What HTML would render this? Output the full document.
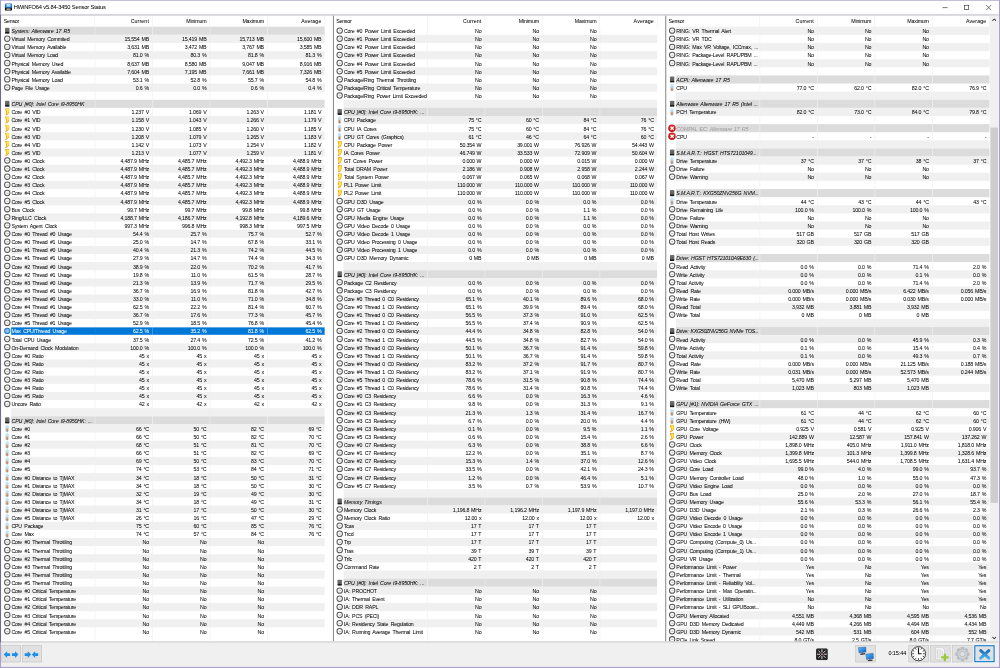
<!DOCTYPE html>
<html lang="en"><head><meta charset="utf-8"><title>HWiNFO64 v5.84-3450 Sensor Status</title>
<style>
*{box-sizing:border-box;margin:0;padding:0}
html,body{width:1000px;height:668px;overflow:hidden;background:#f0f0f0}
body{font-family:"Liberation Sans",sans-serif;font-size:15.6px;color:#000;letter-spacing:-0.68px;word-spacing:3.5px;-webkit-text-stroke:0.07px #000}
#app{position:absolute;left:0;top:0;width:2957px;height:1975.3px;transform:scale(0.338181);transform-origin:0 0;background:#f0f0f0;overflow:hidden;filter:blur(1.45px)}
#app div,#app span,#app i{position:absolute}
.tb{left:0;top:0;width:2957px;height:41px;background:#fff}
.ttl{left:41px;top:10px;font-size:17px;letter-spacing:-0.5px;word-spacing:0;line-height:24px;white-space:nowrap;color:#000}
.bd{background:#aaa0cd}
.lt{left:3px;top:43px;width:2949px;height:4px;background:#b6bac2}
.lb{left:3px;top:1896px;width:2949px;height:4px;background:#d2d2d2}
.p{top:46px;height:1850px;background:#fff;overflow:hidden}
.dv{left:-0.5px;top:0;width:3.6px;height:100%;background:#707070}
.hd{left:3px;top:0;width:980px;height:34px}
.hd span{top:0;line-height:35px;height:34px;white-space:nowrap}
.hd .hl{left:7px}
.hd .hs{width:1px;top:0;height:34px;background:#e2e2e2}
.rows{left:0;top:33px;width:983px}
.r{position:relative!important;display:block;height:24px;width:983px}
.r span{top:0;height:24px;line-height:28px;white-space:nowrap;overflow:hidden}
.n{left:32px;width:248px;padding-left:1px}
.v{width:170px;text-align:right;padding-right:10.5px;word-spacing:2px;letter-spacing:-0.55px}
.v1{left:280px}.v2{left:450px}.v3{left:620px}.v4{left:790px}
.v4{width:169px;padding-right:9.5px}
.sep{top:33px;width:2px;height:2000px;background:rgba(238,238,238,.85);z-index:2}
.s{z-index:3}
.a span{background:#f0f0f0}
.g span{background:#dcdcdc}
.g .n{font-style:italic;letter-spacing:-0.4px;word-spacing:2.5px}
.gx .n{color:#a0a0a0;-webkit-text-stroke-color:#a0a0a0}
.s span{background:#0078d7;color:#fff;-webkit-text-stroke-color:#fff;top:1px;height:22px;line-height:26px}

/* icons */
.r i{display:block}
.c{left:11px;top:2px;width:18.5px;height:18.5px;border:3px solid #585858;border-radius:50%;background:#fafafa}
.c::after{content:"";position:absolute;left:3.6px;top:5.6px;width:6px;height:2px;background:#b09898}
.s .c{border-color:#2b7fca;background:#78b6ea}
.s .c::after{background:#d0e4f8}
.h{left:13.5px;top:3px;width:13px;height:18px;border-radius:2px;background:linear-gradient(#747474,#5a5a5a 70%,#1c1c1c 78%,#1c1c1c 92%,#555)}
.t{left:15px;top:1px;width:10px;height:22px;border-radius:5px;background:linear-gradient(#d8eaf8 0,#bcdcf4 40%,#9ccaee 100%)}
.t::after{content:"";position:absolute;left:3px;top:10px;width:4px;height:10px;border-radius:2px;background:linear-gradient(#f8a848,#f07018 60%,#e85808)}
.b{left:13px;top:1px;width:14px;height:22px;background:#f09428;clip-path:polygon(12% 0,100% 0,100% 45%,74% 78%,26% 100%,8% 97%,30% 70%,26% 42%,8% 16%)}
.b::after{content:"";position:absolute;left:0;top:0;width:14px;height:22px;background:linear-gradient(#ffe040,#fff030 45%,#ffd000);clip-path:polygon(26% 7%,88% 7%,88% 43%,66% 72%,30% 90%,24% 90%,42% 68%,40% 40%,24% 16%)}
.x{left:9px;top:1px;width:22px;height:22px;border-radius:50%;background:radial-gradient(circle at 50% 35%,#e03030,#b80808)}
.x::before,.x::after{content:"";position:absolute;left:4.5px;top:9px;width:13px;height:4px;background:#fff;transform:rotate(45deg)}
.x::after{transform:rotate(-45deg)}
.sb{left:960px;top:0;width:25px;height:100%;background:#f0f0f0}
.th{left:962px;top:331px;width:23px;height:1110px;background:#cdcdcd}
.btn{top:1908px;height:50px;background:#e1e1e1;border:1.5px solid #adadad}
.time{left:2627px;top:1919px;line-height:24px;font-size:16.5px;letter-spacing:-0.3px;white-space:nowrap}
</style></head>
<body>
<div id="app">
<div class="tb"></div>
<svg style="position:absolute;left:14px;top:10px" width="22" height="22" viewBox="0 0 22 22">
<defs><linearGradient id="gi" x1="0" y1="0" x2="0" y2="1"><stop offset="0" stop-color="#2f9ae0"/><stop offset="1" stop-color="#0d5a9a"/></linearGradient></defs>
<rect x="0" y="0" width="22" height="22" rx="4" fill="#0a0a0a"/>
<path d="M4 0h14a4 4 0 0 1 4 4v10h-22v-10a4 4 0 0 1 4-4z" fill="url(#gi)"/>
<rect x="5" y="2" width="12" height="8" rx="1" fill="#b4dcf8"/>
<rect x="5" y="14.5" width="12" height="6" fill="#9a9a9a"/>
</svg>
<div class="ttl">HWiNFO64 v5.84-3450 Sensor Status</div>
<svg style="position:absolute;left:2770px;top:4px" width="180" height="36" viewBox="0 0 180 36">
<path d="M17 18.5h15" stroke="#222" stroke-width="1.8"/>
<rect x="81.500" y="11.500" width="13" height="13" fill="none" stroke="#222" stroke-width="1.8"/>
<path d="M146 11l15 15M161 11l-15 15" stroke="#222" stroke-width="1.8"/>
</svg>
<div class="lt"></div><div class="lb"></div>
<div class="p" style="left:1px;width:983px">
<div class="hd"><span class="hl">Sensor</span>
<span class="v v1" style="left:277px;letter-spacing:.3px">Current</span>
<span class="v v2" style="left:447px">Minimum</span>
<span class="v v3" style="left:617px">Maximum</span>
<span class="v v4" style="left:787px;letter-spacing:.3px">Average</span>
<span class="hs" style="left:276px"></span>
<span class="hs" style="left:446px"></span>
<span class="hs" style="left:616px"></span>
<span class="hs" style="left:786px"></span>
<span class="hs" style="left:956px"></span>
</div>
<div class="sep" style="left:279px"></div>
<div class="sep" style="left:449px"></div>
<div class="sep" style="left:619px"></div>
<div class="sep" style="left:789px"></div>
<div class="rows">
<div class="r g"><i class="h"></i><span class="n">System: Alienware 17 R5</span><span class="v v1"></span><span class="v v2"></span><span class="v v3"></span><span class="v v4"></span></div>
<div class="r a"><i class="c"></i><span class="n">Virtual Memory Commited</span><span class="v v1">15,554 MB</span><span class="v v2">15,419 MB</span><span class="v v3">15,713 MB</span><span class="v v4">15,600 MB</span></div>
<div class="r"><i class="c"></i><span class="n">Virtual Memory Available</span><span class="v v1">3,631 MB</span><span class="v v2">3,472 MB</span><span class="v v3">3,767 MB</span><span class="v v4">3,585 MB</span></div>
<div class="r a"><i class="c"></i><span class="n">Virtual Memory Load</span><span class="v v1">81.0 %</span><span class="v v2">80.3 %</span><span class="v v3">81.8 %</span><span class="v v4">81.3 %</span></div>
<div class="r"><i class="c"></i><span class="n">Physical Memory Used</span><span class="v v1">8,637 MB</span><span class="v v2">8,580 MB</span><span class="v v3">9,047 MB</span><span class="v v4">8,916 MB</span></div>
<div class="r a"><i class="c"></i><span class="n">Physical Memory Available</span><span class="v v1">7,604 MB</span><span class="v v2">7,195 MB</span><span class="v v3">7,661 MB</span><span class="v v4">7,326 MB</span></div>
<div class="r"><i class="c"></i><span class="n">Physical Memory Load</span><span class="v v1">53.1 %</span><span class="v v2">52.8 %</span><span class="v v3">55.7 %</span><span class="v v4">54.8 %</span></div>
<div class="r a"><i class="c"></i><span class="n">Page File Usage</span><span class="v v1">0.6 %</span><span class="v v2">0.0 %</span><span class="v v3">0.6 %</span><span class="v v4">0.4 %</span></div>
<div class="r"></div>
<div class="r g"><i class="h"></i><span class="n">CPU [#0]: Intel Core i9-8950HK</span><span class="v v1"></span><span class="v v2"></span><span class="v v3"></span><span class="v v4"></span></div>
<div class="r"><i class="b"></i><span class="n">Core #0 VID</span><span class="v v1">1.237 V</span><span class="v v2">1.069 V</span><span class="v v3">1.263 V</span><span class="v v4">1.181 V</span></div>
<div class="r a"><i class="b"></i><span class="n">Core #1 VID</span><span class="v v1">1.158 V</span><span class="v v2">1.043 V</span><span class="v v3">1.266 V</span><span class="v v4">1.179 V</span></div>
<div class="r"><i class="b"></i><span class="n">Core #2 VID</span><span class="v v1">1.230 V</span><span class="v v2">1.085 V</span><span class="v v3">1.260 V</span><span class="v v4">1.185 V</span></div>
<div class="r a"><i class="b"></i><span class="n">Core #3 VID</span><span class="v v1">1.208 V</span><span class="v v2">1.079 V</span><span class="v v3">1.265 V</span><span class="v v4">1.183 V</span></div>
<div class="r"><i class="b"></i><span class="n">Core #4 VID</span><span class="v v1">1.142 V</span><span class="v v2">1.073 V</span><span class="v v3">1.254 V</span><span class="v v4">1.182 V</span></div>
<div class="r a"><i class="b"></i><span class="n">Core #5 VID</span><span class="v v1">1.213 V</span><span class="v v2">1.077 V</span><span class="v v3">1.259 V</span><span class="v v4">1.181 V</span></div>
<div class="r"><i class="c"></i><span class="n">Core #0 Clock</span><span class="v v1">4,487.9 MHz</span><span class="v v2">4,485.7 MHz</span><span class="v v3">4,492.3 MHz</span><span class="v v4">4,488.9 MHz</span></div>
<div class="r a"><i class="c"></i><span class="n">Core #1 Clock</span><span class="v v1">4,487.9 MHz</span><span class="v v2">4,485.7 MHz</span><span class="v v3">4,492.3 MHz</span><span class="v v4">4,488.9 MHz</span></div>
<div class="r"><i class="c"></i><span class="n">Core #2 Clock</span><span class="v v1">4,487.9 MHz</span><span class="v v2">4,485.7 MHz</span><span class="v v3">4,492.3 MHz</span><span class="v v4">4,488.9 MHz</span></div>
<div class="r a"><i class="c"></i><span class="n">Core #3 Clock</span><span class="v v1">4,487.9 MHz</span><span class="v v2">4,485.7 MHz</span><span class="v v3">4,492.3 MHz</span><span class="v v4">4,488.9 MHz</span></div>
<div class="r"><i class="c"></i><span class="n">Core #4 Clock</span><span class="v v1">4,487.9 MHz</span><span class="v v2">4,485.7 MHz</span><span class="v v3">4,492.3 MHz</span><span class="v v4">4,488.9 MHz</span></div>
<div class="r a"><i class="c"></i><span class="n">Core #5 Clock</span><span class="v v1">4,487.9 MHz</span><span class="v v2">4,485.7 MHz</span><span class="v v3">4,492.3 MHz</span><span class="v v4">4,488.9 MHz</span></div>
<div class="r"><i class="c"></i><span class="n">Bus Clock</span><span class="v v1">99.7 MHz</span><span class="v v2">99.7 MHz</span><span class="v v3">99.8 MHz</span><span class="v v4">99.8 MHz</span></div>
<div class="r a"><i class="c"></i><span class="n">Ring/LLC Clock</span><span class="v v1">4,188.7 MHz</span><span class="v v2">4,186.7 MHz</span><span class="v v3">4,192.8 MHz</span><span class="v v4">4,189.6 MHz</span></div>
<div class="r"><i class="c"></i><span class="n">System Agent Clock</span><span class="v v1">997.3 MHz</span><span class="v v2">996.8 MHz</span><span class="v v3">998.3 MHz</span><span class="v v4">997.5 MHz</span></div>
<div class="r a"><i class="c"></i><span class="n">Core #0 Thread #0 Usage</span><span class="v v1">54.4 %</span><span class="v v2">25.7 %</span><span class="v v3">75.7 %</span><span class="v v4">52.7 %</span></div>
<div class="r"><i class="c"></i><span class="n">Core #0 Thread #1 Usage</span><span class="v v1">25.0 %</span><span class="v v2">14.7 %</span><span class="v v3">67.8 %</span><span class="v v4">33.1 %</span></div>
<div class="r a"><i class="c"></i><span class="n">Core #1 Thread #0 Usage</span><span class="v v1">40.4 %</span><span class="v v2">21.3 %</span><span class="v v3">74.2 %</span><span class="v v4">44.5 %</span></div>
<div class="r"><i class="c"></i><span class="n">Core #1 Thread #1 Usage</span><span class="v v1">27.9 %</span><span class="v v2">14.7 %</span><span class="v v3">74.4 %</span><span class="v v4">34.3 %</span></div>
<div class="r a"><i class="c"></i><span class="n">Core #2 Thread #0 Usage</span><span class="v v1">38.9 %</span><span class="v v2">22.0 %</span><span class="v v3">70.2 %</span><span class="v v4">41.7 %</span></div>
<div class="r"><i class="c"></i><span class="n">Core #2 Thread #1 Usage</span><span class="v v1">19.8 %</span><span class="v v2">11.0 %</span><span class="v v3">61.5 %</span><span class="v v4">28.7 %</span></div>
<div class="r a"><i class="c"></i><span class="n">Core #3 Thread #0 Usage</span><span class="v v1">21.3 %</span><span class="v v2">13.9 %</span><span class="v v3">71.7 %</span><span class="v v4">29.5 %</span></div>
<div class="r"><i class="c"></i><span class="n">Core #3 Thread #1 Usage</span><span class="v v1">36.7 %</span><span class="v v2">16.9 %</span><span class="v v3">81.8 %</span><span class="v v4">42.7 %</span></div>
<div class="r a"><i class="c"></i><span class="n">Core #4 Thread #0 Usage</span><span class="v v1">33.0 %</span><span class="v v2">11.0 %</span><span class="v v3">71.0 %</span><span class="v v4">34.8 %</span></div>
<div class="r"><i class="c"></i><span class="n">Core #4 Thread #1 Usage</span><span class="v v1">62.5 %</span><span class="v v2">22.2 %</span><span class="v v3">81.4 %</span><span class="v v4">60.7 %</span></div>
<div class="r a"><i class="c"></i><span class="n">Core #5 Thread #0 Usage</span><span class="v v1">36.7 %</span><span class="v v2">17.6 %</span><span class="v v3">77.3 %</span><span class="v v4">45.7 %</span></div>
<div class="r"><i class="c"></i><span class="n">Core #5 Thread #1 Usage</span><span class="v v1">52.9 %</span><span class="v v2">18.5 %</span><span class="v v3">76.8 %</span><span class="v v4">45.4 %</span></div>
<div class="r s"><i class="c"></i><span class="n">Max CPU/Thread Usage</span><span class="v v1">62.5 %</span><span class="v v2">35.2 %</span><span class="v v3">81.8 %</span><span class="v v4">62.5 %</span></div>
<div class="r"><i class="c"></i><span class="n">Total CPU Usage</span><span class="v v1">37.5 %</span><span class="v v2">27.4 %</span><span class="v v3">72.5 %</span><span class="v v4">41.2 %</span></div>
<div class="r a"><i class="c"></i><span class="n">On-Demand Clock Modulation</span><span class="v v1">100.0 %</span><span class="v v2">100.0 %</span><span class="v v3">100.0 %</span><span class="v v4">100.0 %</span></div>
<div class="r"><i class="c"></i><span class="n">Core #0 Ratio</span><span class="v v1">45 x</span><span class="v v2">45 x</span><span class="v v3">45 x</span><span class="v v4">45 x</span></div>
<div class="r a"><i class="c"></i><span class="n">Core #1 Ratio</span><span class="v v1">45 x</span><span class="v v2">45 x</span><span class="v v3">45 x</span><span class="v v4">45 x</span></div>
<div class="r"><i class="c"></i><span class="n">Core #2 Ratio</span><span class="v v1">45 x</span><span class="v v2">45 x</span><span class="v v3">45 x</span><span class="v v4">45 x</span></div>
<div class="r a"><i class="c"></i><span class="n">Core #3 Ratio</span><span class="v v1">45 x</span><span class="v v2">45 x</span><span class="v v3">45 x</span><span class="v v4">45 x</span></div>
<div class="r"><i class="c"></i><span class="n">Core #4 Ratio</span><span class="v v1">45 x</span><span class="v v2">45 x</span><span class="v v3">45 x</span><span class="v v4">45 x</span></div>
<div class="r a"><i class="c"></i><span class="n">Core #5 Ratio</span><span class="v v1">45 x</span><span class="v v2">45 x</span><span class="v v3">45 x</span><span class="v v4">45 x</span></div>
<div class="r"><i class="c"></i><span class="n">Uncore Ratio</span><span class="v v1">42 x</span><span class="v v2">42 x</span><span class="v v3">42 x</span><span class="v v4">42 x</span></div>
<div class="r a"><span class="n"></span><span class="v v1"></span><span class="v v2"></span><span class="v v3"></span><span class="v v4"></span></div>
<div class="r g"><i class="h"></i><span class="n">CPU [#0]: Intel Core i9-8950HK: ...</span><span class="v v1"></span><span class="v v2"></span><span class="v v3"></span><span class="v v4"></span></div>
<div class="r a"><i class="t"></i><span class="n">Core #0</span><span class="v v1">66 °C</span><span class="v v2">50 °C</span><span class="v v3">82 °C</span><span class="v v4">69 °C</span></div>
<div class="r"><i class="t"></i><span class="n">Core #1</span><span class="v v1">66 °C</span><span class="v v2">50 °C</span><span class="v v3">82 °C</span><span class="v v4">70 °C</span></div>
<div class="r a"><i class="t"></i><span class="n">Core #2</span><span class="v v1">68 °C</span><span class="v v2">51 °C</span><span class="v v3">81 °C</span><span class="v v4">70 °C</span></div>
<div class="r"><i class="t"></i><span class="n">Core #3</span><span class="v v1">66 °C</span><span class="v v2">51 °C</span><span class="v v3">82 °C</span><span class="v v4">69 °C</span></div>
<div class="r a"><i class="t"></i><span class="n">Core #4</span><span class="v v1">69 °C</span><span class="v v2">50 °C</span><span class="v v3">83 °C</span><span class="v v4">70 °C</span></div>
<div class="r"><i class="t"></i><span class="n">Core #5</span><span class="v v1">74 °C</span><span class="v v2">53 °C</span><span class="v v3">84 °C</span><span class="v v4">71 °C</span></div>
<div class="r a"><i class="t"></i><span class="n">Core #0 Distance to TjMAX</span><span class="v v1">34 °C</span><span class="v v2">18 °C</span><span class="v v3">50 °C</span><span class="v v4">31 °C</span></div>
<div class="r"><i class="t"></i><span class="n">Core #1 Distance to TjMAX</span><span class="v v1">34 °C</span><span class="v v2">18 °C</span><span class="v v3">50 °C</span><span class="v v4">30 °C</span></div>
<div class="r a"><i class="t"></i><span class="n">Core #2 Distance to TjMAX</span><span class="v v1">32 °C</span><span class="v v2">19 °C</span><span class="v v3">49 °C</span><span class="v v4">30 °C</span></div>
<div class="r"><i class="t"></i><span class="n">Core #3 Distance to TjMAX</span><span class="v v1">34 °C</span><span class="v v2">18 °C</span><span class="v v3">49 °C</span><span class="v v4">31 °C</span></div>
<div class="r a"><i class="t"></i><span class="n">Core #4 Distance to TjMAX</span><span class="v v1">31 °C</span><span class="v v2">17 °C</span><span class="v v3">50 °C</span><span class="v v4">30 °C</span></div>
<div class="r"><i class="t"></i><span class="n">Core #5 Distance to TjMAX</span><span class="v v1">26 °C</span><span class="v v2">16 °C</span><span class="v v3">47 °C</span><span class="v v4">29 °C</span></div>
<div class="r a"><i class="t"></i><span class="n">CPU Package</span><span class="v v1">75 °C</span><span class="v v2">60 °C</span><span class="v v3">85 °C</span><span class="v v4">76 °C</span></div>
<div class="r"><i class="t"></i><span class="n">Core Max</span><span class="v v1">74 °C</span><span class="v v2">57 °C</span><span class="v v3">84 °C</span><span class="v v4">76 °C</span></div>
<div class="r a"><i class="c"></i><span class="n">Core #0 Thermal Throttling</span><span class="v v1">No</span><span class="v v2">No</span><span class="v v3">No</span><span class="v v4"></span></div>
<div class="r"><i class="c"></i><span class="n">Core #1 Thermal Throttling</span><span class="v v1">No</span><span class="v v2">No</span><span class="v v3">No</span></div>
<div class="r a"><i class="c"></i><span class="n">Core #2 Thermal Throttling</span><span class="v v1">No</span><span class="v v2">No</span><span class="v v3">No</span><span class="v v4"></span></div>
<div class="r"><i class="c"></i><span class="n">Core #3 Thermal Throttling</span><span class="v v1">No</span><span class="v v2">No</span><span class="v v3">No</span></div>
<div class="r a"><i class="c"></i><span class="n">Core #4 Thermal Throttling</span><span class="v v1">No</span><span class="v v2">No</span><span class="v v3">No</span><span class="v v4"></span></div>
<div class="r"><i class="c"></i><span class="n">Core #5 Thermal Throttling</span><span class="v v1">No</span><span class="v v2">No</span><span class="v v3">No</span></div>
<div class="r a"><i class="c"></i><span class="n">Core #0 Critical Temperature</span><span class="v v1">No</span><span class="v v2">No</span><span class="v v3">No</span><span class="v v4"></span></div>
<div class="r"><i class="c"></i><span class="n">Core #1 Critical Temperature</span><span class="v v1">No</span><span class="v v2">No</span><span class="v v3">No</span></div>
<div class="r a"><i class="c"></i><span class="n">Core #2 Critical Temperature</span><span class="v v1">No</span><span class="v v2">No</span><span class="v v3">No</span><span class="v v4"></span></div>
<div class="r"><i class="c"></i><span class="n">Core #3 Critical Temperature</span><span class="v v1">No</span><span class="v v2">No</span><span class="v v3">No</span></div>
<div class="r a"><i class="c"></i><span class="n">Core #4 Critical Temperature</span><span class="v v1">No</span><span class="v v2">No</span><span class="v v3">No</span><span class="v v4"></span></div>
<div class="r"><i class="c"></i><span class="n">Core #5 Critical Temperature</span><span class="v v1">No</span><span class="v v2">No</span><span class="v v3">No</span></div>
<div class="r"></div>
</div>
</div>
<div class="p" style="left:984px;width:983px">
<div class="dv"></div>
<div class="hd"><span class="hl">Sensor</span>
<span class="v v1" style="left:277px;letter-spacing:.3px">Current</span>
<span class="v v2" style="left:447px">Minimum</span>
<span class="v v3" style="left:617px">Maximum</span>
<span class="v v4" style="left:787px;letter-spacing:.3px">Average</span>
<span class="hs" style="left:276px"></span>
<span class="hs" style="left:446px"></span>
<span class="hs" style="left:616px"></span>
<span class="hs" style="left:786px"></span>
<span class="hs" style="left:956px"></span>
</div>
<div class="sep" style="left:279px"></div>
<div class="sep" style="left:449px"></div>
<div class="sep" style="left:619px"></div>
<div class="sep" style="left:789px"></div>
<div class="rows">
<div class="r"><i class="c"></i><span class="n">Core #0 Power Limit Exceeded</span><span class="v v1">No</span><span class="v v2">No</span><span class="v v3">No</span></div>
<div class="r a"><i class="c"></i><span class="n">Core #1 Power Limit Exceeded</span><span class="v v1">No</span><span class="v v2">No</span><span class="v v3">No</span><span class="v v4"></span></div>
<div class="r"><i class="c"></i><span class="n">Core #2 Power Limit Exceeded</span><span class="v v1">No</span><span class="v v2">No</span><span class="v v3">No</span></div>
<div class="r a"><i class="c"></i><span class="n">Core #3 Power Limit Exceeded</span><span class="v v1">No</span><span class="v v2">No</span><span class="v v3">No</span><span class="v v4"></span></div>
<div class="r"><i class="c"></i><span class="n">Core #4 Power Limit Exceeded</span><span class="v v1">No</span><span class="v v2">No</span><span class="v v3">No</span></div>
<div class="r a"><i class="c"></i><span class="n">Core #5 Power Limit Exceeded</span><span class="v v1">No</span><span class="v v2">No</span><span class="v v3">No</span><span class="v v4"></span></div>
<div class="r"><i class="c"></i><span class="n">Package/Ring Thermal Throttling</span><span class="v v1">No</span><span class="v v2">No</span><span class="v v3">No</span></div>
<div class="r a"><i class="c"></i><span class="n">Package/Ring Critical Temperature</span><span class="v v1">No</span><span class="v v2">No</span><span class="v v3">No</span><span class="v v4"></span></div>
<div class="r"><i class="c"></i><span class="n">Package/Ring Power Limit Exceeded</span><span class="v v1">No</span><span class="v v2">No</span><span class="v v3">No</span></div>
<div class="r a"><span class="n"></span><span class="v v1"></span><span class="v v2"></span><span class="v v3"></span><span class="v v4"></span></div>
<div class="r g"><i class="h"></i><span class="n">CPU [#0]: Intel Core i9-8950HK: ...</span><span class="v v1"></span><span class="v v2"></span><span class="v v3"></span><span class="v v4"></span></div>
<div class="r a"><i class="t"></i><span class="n">CPU Package</span><span class="v v1">75 °C</span><span class="v v2">60 °C</span><span class="v v3">84 °C</span><span class="v v4">76 °C</span></div>
<div class="r"><i class="t"></i><span class="n">CPU IA Cores</span><span class="v v1">75 °C</span><span class="v v2">60 °C</span><span class="v v3">84 °C</span><span class="v v4">76 °C</span></div>
<div class="r a"><i class="t"></i><span class="n">CPU GT Cores (Graphics)</span><span class="v v1">61 °C</span><span class="v v2">46 °C</span><span class="v v3">64 °C</span><span class="v v4">60 °C</span></div>
<div class="r"><i class="b"></i><span class="n">CPU Package Power</span><span class="v v1">50.354 W</span><span class="v v2">39.001 W</span><span class="v v3">76.926 W</span><span class="v v4">54.443 W</span></div>
<div class="r a"><i class="b"></i><span class="n">IA Cores Power</span><span class="v v1">46.749 W</span><span class="v v2">33.533 W</span><span class="v v3">72.909 W</span><span class="v v4">50.604 W</span></div>
<div class="r"><i class="b"></i><span class="n">GT Cores Power</span><span class="v v1">0.000 W</span><span class="v v2">0.000 W</span><span class="v v3">0.015 W</span><span class="v v4">0.000 W</span></div>
<div class="r a"><i class="b"></i><span class="n">Total DRAM Power</span><span class="v v1">2.186 W</span><span class="v v2">0.908 W</span><span class="v v3">2.958 W</span><span class="v v4">2.244 W</span></div>
<div class="r"><i class="b"></i><span class="n">Total System Power</span><span class="v v1">0.067 W</span><span class="v v2">0.065 W</span><span class="v v3">0.068 W</span><span class="v v4">0.067 W</span></div>
<div class="r a"><i class="b"></i><span class="n">PL1 Power Limit</span><span class="v v1">110.000 W</span><span class="v v2">110.000 W</span><span class="v v3">110.000 W</span><span class="v v4">110.000 W</span></div>
<div class="r"><i class="b"></i><span class="n">PL2 Power Limit</span><span class="v v1">110.000 W</span><span class="v v2">110.000 W</span><span class="v v3">110.000 W</span><span class="v v4">110.000 W</span></div>
<div class="r a"><i class="c"></i><span class="n">GPU D3D Usage</span><span class="v v1">0.0 %</span><span class="v v2">0.0 %</span><span class="v v3">0.0 %</span><span class="v v4">0.0 %</span></div>
<div class="r"><i class="c"></i><span class="n">GPU GT Usage</span><span class="v v1">0.0 %</span><span class="v v2">0.0 %</span><span class="v v3">1.1 %</span><span class="v v4">0.0 %</span></div>
<div class="r a"><i class="c"></i><span class="n">GPU Media Engine Usage</span><span class="v v1">0.0 %</span><span class="v v2">0.0 %</span><span class="v v3">1.1 %</span><span class="v v4">0.0 %</span></div>
<div class="r"><i class="c"></i><span class="n">GPU Video Decode 0 Usage</span><span class="v v1">0.0 %</span><span class="v v2">0.0 %</span><span class="v v3">0.0 %</span><span class="v v4">0.0 %</span></div>
<div class="r a"><i class="c"></i><span class="n">GPU Video Decode 1 Usage</span><span class="v v1">0.0 %</span><span class="v v2">0.0 %</span><span class="v v3">0.0 %</span><span class="v v4">0.0 %</span></div>
<div class="r"><i class="c"></i><span class="n">GPU Video Processing 0 Usage</span><span class="v v1">0.0 %</span><span class="v v2">0.0 %</span><span class="v v3">0.0 %</span><span class="v v4">0.0 %</span></div>
<div class="r a"><i class="c"></i><span class="n">GPU Video Processing 1 Usage</span><span class="v v1">0.0 %</span><span class="v v2">0.0 %</span><span class="v v3">0.0 %</span><span class="v v4">0.0 %</span></div>
<div class="r"><i class="c"></i><span class="n">GPU D3D Memory Dynamic</span><span class="v v1">0 MB</span><span class="v v2">0 MB</span><span class="v v3">0 MB</span><span class="v v4">0 MB</span></div>
<div class="r a"><span class="n"></span><span class="v v1"></span><span class="v v2"></span><span class="v v3"></span><span class="v v4"></span></div>
<div class="r g"><i class="h"></i><span class="n">CPU [#0]: Intel Core i9-8950HK: ...</span><span class="v v1"></span><span class="v v2"></span><span class="v v3"></span><span class="v v4"></span></div>
<div class="r a"><i class="c"></i><span class="n">Package C2 Residency</span><span class="v v1">0.0 %</span><span class="v v2">0.0 %</span><span class="v v3">0.0 %</span><span class="v v4">0.0 %</span></div>
<div class="r"><i class="c"></i><span class="n">Package C3 Residency</span><span class="v v1">0.0 %</span><span class="v v2">0.0 %</span><span class="v v3">0.0 %</span><span class="v v4">0.0 %</span></div>
<div class="r a"><i class="c"></i><span class="n">Core #0 Thread 0 C0 Residency</span><span class="v v1">65.1 %</span><span class="v v2">40.1 %</span><span class="v v3">89.6 %</span><span class="v v4">68.0 %</span></div>
<div class="r"><i class="c"></i><span class="n">Core #0 Thread 1 C0 Residency</span><span class="v v1">65.1 %</span><span class="v v2">39.9 %</span><span class="v v3">89.4 %</span><span class="v v4">68.0 %</span></div>
<div class="r a"><i class="c"></i><span class="n">Core #1 Thread 0 C0 Residency</span><span class="v v1">56.5 %</span><span class="v v2">37.3 %</span><span class="v v3">91.0 %</span><span class="v v4">62.5 %</span></div>
<div class="r"><i class="c"></i><span class="n">Core #1 Thread 1 C0 Residency</span><span class="v v1">56.5 %</span><span class="v v2">37.4 %</span><span class="v v3">90.9 %</span><span class="v v4">62.5 %</span></div>
<div class="r a"><i class="c"></i><span class="n">Core #2 Thread 0 C0 Residency</span><span class="v v1">44.4 %</span><span class="v v2">34.8 %</span><span class="v v3">82.8 %</span><span class="v v4">54.0 %</span></div>
<div class="r"><i class="c"></i><span class="n">Core #2 Thread 1 C0 Residency</span><span class="v v1">44.5 %</span><span class="v v2">34.8 %</span><span class="v v3">82.7 %</span><span class="v v4">54.0 %</span></div>
<div class="r a"><i class="c"></i><span class="n">Core #3 Thread 0 C0 Residency</span><span class="v v1">50.1 %</span><span class="v v2">36.7 %</span><span class="v v3">91.4 %</span><span class="v v4">59.8 %</span></div>
<div class="r"><i class="c"></i><span class="n">Core #3 Thread 1 C0 Residency</span><span class="v v1">50.1 %</span><span class="v v2">36.7 %</span><span class="v v3">91.4 %</span><span class="v v4">59.8 %</span></div>
<div class="r a"><i class="c"></i><span class="n">Core #4 Thread 0 C0 Residency</span><span class="v v1">83.2 %</span><span class="v v2">37.2 %</span><span class="v v3">91.7 %</span><span class="v v4">80.7 %</span></div>
<div class="r"><i class="c"></i><span class="n">Core #4 Thread 1 C0 Residency</span><span class="v v1">83.2 %</span><span class="v v2">37.1 %</span><span class="v v3">91.9 %</span><span class="v v4">80.7 %</span></div>
<div class="r a"><i class="c"></i><span class="n">Core #5 Thread 0 C0 Residency</span><span class="v v1">78.6 %</span><span class="v v2">31.5 %</span><span class="v v3">90.8 %</span><span class="v v4">74.4 %</span></div>
<div class="r"><i class="c"></i><span class="n">Core #5 Thread 1 C0 Residency</span><span class="v v1">78.6 %</span><span class="v v2">31.4 %</span><span class="v v3">90.8 %</span><span class="v v4">74.4 %</span></div>
<div class="r a"><i class="c"></i><span class="n">Core #0 C3 Residency</span><span class="v v1">6.6 %</span><span class="v v2">0.0 %</span><span class="v v3">16.3 %</span><span class="v v4">4.6 %</span></div>
<div class="r"><i class="c"></i><span class="n">Core #1 C3 Residency</span><span class="v v1">9.8 %</span><span class="v v2">0.0 %</span><span class="v v3">31.3 %</span><span class="v v4">9.1 %</span></div>
<div class="r a"><i class="c"></i><span class="n">Core #2 C3 Residency</span><span class="v v1">21.3 %</span><span class="v v2">1.3 %</span><span class="v v3">31.4 %</span><span class="v v4">16.7 %</span></div>
<div class="r"><i class="c"></i><span class="n">Core #3 C3 Residency</span><span class="v v1">6.7 %</span><span class="v v2">0.0 %</span><span class="v v3">20.0 %</span><span class="v v4">4.4 %</span></div>
<div class="r a"><i class="c"></i><span class="n">Core #4 C3 Residency</span><span class="v v1">0.1 %</span><span class="v v2">0.0 %</span><span class="v v3">9.5 %</span><span class="v v4">1.1 %</span></div>
<div class="r"><i class="c"></i><span class="n">Core #5 C3 Residency</span><span class="v v1">0.6 %</span><span class="v v2">0.0 %</span><span class="v v3">15.4 %</span><span class="v v4">2.6 %</span></div>
<div class="r a"><i class="c"></i><span class="n">Core #0 C7 Residency</span><span class="v v1">6.3 %</span><span class="v v2">0.0 %</span><span class="v v3">38.8 %</span><span class="v v4">6.6 %</span></div>
<div class="r"><i class="c"></i><span class="n">Core #1 C7 Residency</span><span class="v v1">12.2 %</span><span class="v v2">0.0 %</span><span class="v v3">35.1 %</span><span class="v v4">8.7 %</span></div>
<div class="r a"><i class="c"></i><span class="n">Core #2 C7 Residency</span><span class="v v1">15.3 %</span><span class="v v2">1.4 %</span><span class="v v3">37.0 %</span><span class="v v4">12.6 %</span></div>
<div class="r"><i class="c"></i><span class="n">Core #3 C7 Residency</span><span class="v v1">33.5 %</span><span class="v v2">0.0 %</span><span class="v v3">42.1 %</span><span class="v v4">24.3 %</span></div>
<div class="r a"><i class="c"></i><span class="n">Core #4 C7 Residency</span><span class="v v1">1.2 %</span><span class="v v2">0.0 %</span><span class="v v3">46.4 %</span><span class="v v4">5.1 %</span></div>
<div class="r"><i class="c"></i><span class="n">Core #5 C7 Residency</span><span class="v v1">3.5 %</span><span class="v v2">0.7 %</span><span class="v v3">53.9 %</span><span class="v v4">10.7 %</span></div>
<div class="r a"><span class="n"></span><span class="v v1"></span><span class="v v2"></span><span class="v v3"></span><span class="v v4"></span></div>
<div class="r g"><i class="h"></i><span class="n">Memory Timings</span><span class="v v1"></span><span class="v v2"></span><span class="v v3"></span><span class="v v4"></span></div>
<div class="r a"><i class="c"></i><span class="n">Memory Clock</span><span class="v v1">1,196.8 MHz</span><span class="v v2">1,196.2 MHz</span><span class="v v3">1,197.9 MHz</span><span class="v v4">1,197.0 MHz</span></div>
<div class="r"><i class="c"></i><span class="n">Memory Clock Ratio</span><span class="v v1">12.00 x</span><span class="v v2">12.00 x</span><span class="v v3">12.00 x</span><span class="v v4">12.00 x</span></div>
<div class="r a"><i class="c"></i><span class="n">Tcas</span><span class="v v1">17 T</span><span class="v v2">17 T</span><span class="v v3">17 T</span><span class="v v4"></span></div>
<div class="r"><i class="c"></i><span class="n">Trcd</span><span class="v v1">17 T</span><span class="v v2">17 T</span><span class="v v3">17 T</span></div>
<div class="r a"><i class="c"></i><span class="n">Trp</span><span class="v v1">17 T</span><span class="v v2">17 T</span><span class="v v3">17 T</span><span class="v v4"></span></div>
<div class="r"><i class="c"></i><span class="n">Tras</span><span class="v v1">39 T</span><span class="v v2">39 T</span><span class="v v3">39 T</span></div>
<div class="r a"><i class="c"></i><span class="n">Trfc</span><span class="v v1">420 T</span><span class="v v2">420 T</span><span class="v v3">420 T</span><span class="v v4"></span></div>
<div class="r"><i class="c"></i><span class="n">Command Rate</span><span class="v v1">2 T</span><span class="v v2">2 T</span><span class="v v3">2 T</span></div>
<div class="r a"><span class="n"></span><span class="v v1"></span><span class="v v2"></span><span class="v v3"></span><span class="v v4"></span></div>
<div class="r g"><i class="h"></i><span class="n">CPU [#0]: Intel Core i9-8950HK: ...</span><span class="v v1"></span><span class="v v2"></span><span class="v v3"></span><span class="v v4"></span></div>
<div class="r a"><i class="c"></i><span class="n">IA: PROCHOT</span><span class="v v1">No</span><span class="v v2">No</span><span class="v v3">No</span><span class="v v4"></span></div>
<div class="r"><i class="c"></i><span class="n">IA: Thermal Event</span><span class="v v1">No</span><span class="v v2">No</span><span class="v v3">No</span></div>
<div class="r a"><i class="c"></i><span class="n">IA: DDR RAPL</span><span class="v v1">No</span><span class="v v2">No</span><span class="v v3">No</span><span class="v v4"></span></div>
<div class="r"><i class="c"></i><span class="n">IA: PCS (PECI)</span><span class="v v1">No</span><span class="v v2">No</span><span class="v v3">No</span></div>
<div class="r a"><i class="c"></i><span class="n">IA: Residency State Regulation</span><span class="v v1">No</span><span class="v v2">No</span><span class="v v3">No</span><span class="v v4"></span></div>
<div class="r"><i class="c"></i><span class="n">IA: Running Average Thermal Limit</span><span class="v v1">No</span><span class="v v2">No</span><span class="v v3">No</span></div>
<div class="r"></div>
</div>
</div>
<div class="p" style="left:1967px;width:985px">
<div class="dv"></div>
<div class="hd"><span class="hl">Sensor</span>
<span class="v v1" style="left:277px;letter-spacing:.3px">Current</span>
<span class="v v2" style="left:447px">Minimum</span>
<span class="v v3" style="left:617px">Maximum</span>
<span class="v v4" style="left:787px;letter-spacing:.3px">Average</span>
<span class="hs" style="left:276px"></span>
<span class="hs" style="left:446px"></span>
<span class="hs" style="left:616px"></span>
<span class="hs" style="left:786px"></span>
<span class="hs" style="left:956px"></span>
</div>
<div class="sep" style="left:279px"></div>
<div class="sep" style="left:449px"></div>
<div class="sep" style="left:619px"></div>
<div class="sep" style="left:789px"></div>
<div class="rows">
<div class="r a"><i class="c"></i><span class="n">RING: VR Thermal Alert</span><span class="v v1">No</span><span class="v v2">No</span><span class="v v3">No</span><span class="v v4"></span></div>
<div class="r"><i class="c"></i><span class="n">RING: VR TDC</span><span class="v v1">No</span><span class="v v2">No</span><span class="v v3">No</span></div>
<div class="r a"><i class="c"></i><span class="n">RING: Max VR Voltage, ICCmax, ...</span><span class="v v1">No</span><span class="v v2">No</span><span class="v v3">No</span><span class="v v4"></span></div>
<div class="r"><i class="c"></i><span class="n">RING: Package-Level RAPL/PBM ...</span><span class="v v1">No</span><span class="v v2">No</span><span class="v v3">No</span></div>
<div class="r a"><i class="c"></i><span class="n">RING: Package-Level RAPL/PBM ...</span><span class="v v1">No</span><span class="v v2">No</span><span class="v v3">No</span><span class="v v4"></span></div>
<div class="r"></div>
<div class="r g"><i class="h"></i><span class="n">ACPI: Alienware 17 R5</span><span class="v v1"></span><span class="v v2"></span><span class="v v3"></span><span class="v v4"></span></div>
<div class="r"><i class="t"></i><span class="n">CPU</span><span class="v v1">77.0 °C</span><span class="v v2">62.0 °C</span><span class="v v3">82.0 °C</span><span class="v v4">76.9 °C</span></div>
<div class="r a"><span class="n"></span><span class="v v1"></span><span class="v v2"></span><span class="v v3"></span><span class="v v4"></span></div>
<div class="r g"><i class="h"></i><span class="n">Alienware Alienware 17 R5 (Intel ...</span><span class="v v1"></span><span class="v v2"></span><span class="v v3"></span><span class="v v4"></span></div>
<div class="r a"><i class="t"></i><span class="n">PCH Temperature</span><span class="v v1">82.0 °C</span><span class="v v2">73.0 °C</span><span class="v v3">84.0 °C</span><span class="v v4">79.8 °C</span></div>
<div class="r"></div>
<div class="r g gx"><i class="x"></i><span class="n">COMPAL EC: Alienware 17 R5</span><span class="v v1"></span><span class="v v2"></span><span class="v v3"></span><span class="v v4"></span></div>
<div class="r"><i class="x"></i><span class="n">CPU</span><span class="v v1">-</span><span class="v v2">-</span><span class="v v3">-</span><span class="v v4">-</span></div>
<div class="r a"><span class="n"></span><span class="v v1"></span><span class="v v2"></span><span class="v v3"></span><span class="v v4"></span></div>
<div class="r g"><i class="h"></i><span class="n">S.M.A.R.T.: HGST HTS72101049...</span><span class="v v1"></span><span class="v v2"></span><span class="v v3"></span><span class="v v4"></span></div>
<div class="r a"><i class="t"></i><span class="n">Drive Temperature</span><span class="v v1">37 °C</span><span class="v v2">37 °C</span><span class="v v3">38 °C</span><span class="v v4">37 °C</span></div>
<div class="r"><i class="c"></i><span class="n">Drive Failure</span><span class="v v1">No</span><span class="v v2">No</span><span class="v v3">No</span></div>
<div class="r a"><i class="c"></i><span class="n">Drive Warning</span><span class="v v1">No</span><span class="v v2">No</span><span class="v v3">No</span><span class="v v4"></span></div>
<div class="r"></div>
<div class="r g"><i class="h"></i><span class="n" style="letter-spacing:-0.55px">S.M.A.R.T.: KXG50ZNV256G NVM...</span><span class="v v1"></span><span class="v v2"></span><span class="v v3"></span><span class="v v4"></span></div>
<div class="r"><i class="t"></i><span class="n">Drive Temperature</span><span class="v v1">44 °C</span><span class="v v2">43 °C</span><span class="v v3">44 °C</span><span class="v v4">43 °C</span></div>
<div class="r a"><i class="c"></i><span class="n">Drive Remaining Life</span><span class="v v1">100.0 %</span><span class="v v2">100.0 %</span><span class="v v3">100.0 %</span><span class="v v4"></span></div>
<div class="r"><i class="c"></i><span class="n">Drive Failure</span><span class="v v1">No</span><span class="v v2">No</span><span class="v v3">No</span></div>
<div class="r a"><i class="c"></i><span class="n">Drive Warning</span><span class="v v1">No</span><span class="v v2">No</span><span class="v v3">No</span><span class="v v4"></span></div>
<div class="r"><i class="c"></i><span class="n">Total Host Writes</span><span class="v v1">517 GB</span><span class="v v2">517 GB</span><span class="v v3">517 GB</span></div>
<div class="r a"><i class="c"></i><span class="n">Total Host Reads</span><span class="v v1">320 GB</span><span class="v v2">320 GB</span><span class="v v3">320 GB</span><span class="v v4"></span></div>
<div class="r"></div>
<div class="r g"><i class="h"></i><span class="n" style="letter-spacing:-0.58px">Drive: HGST HTS721010A9E630 (...</span><span class="v v1"></span><span class="v v2"></span><span class="v v3"></span><span class="v v4"></span></div>
<div class="r"><i class="c"></i><span class="n">Read Activity</span><span class="v v1">0.0 %</span><span class="v v2">0.0 %</span><span class="v v3">71.4 %</span><span class="v v4">2.0 %</span></div>
<div class="r a"><i class="c"></i><span class="n">Write Activity</span><span class="v v1">0.0 %</span><span class="v v2">0.0 %</span><span class="v v3">0.1 %</span><span class="v v4">0.0 %</span></div>
<div class="r"><i class="c"></i><span class="n">Total Activity</span><span class="v v1">0.0 %</span><span class="v v2">0.0 %</span><span class="v v3">71.4 %</span><span class="v v4">2.0 %</span></div>
<div class="r a"><i class="c"></i><span class="n">Read Rate</span><span class="v v1">0.000 MB/s</span><span class="v v2">0.000 MB/s</span><span class="v v3">6.422 MB/s</span><span class="v v4">0.056 MB/s</span></div>
<div class="r"><i class="c"></i><span class="n">Write Rate</span><span class="v v1">0.000 MB/s</span><span class="v v2">0.000 MB/s</span><span class="v v3">0.030 MB/s</span><span class="v v4">0.000 MB/s</span></div>
<div class="r a"><i class="c"></i><span class="n">Read Total</span><span class="v v1">3,932 MB</span><span class="v v2">3,881 MB</span><span class="v v3">3,932 MB</span><span class="v v4"></span></div>
<div class="r"><i class="c"></i><span class="n">Write Total</span><span class="v v1">0 MB</span><span class="v v2">0 MB</span><span class="v v3">0 MB</span></div>
<div class="r a"><span class="n"></span><span class="v v1"></span><span class="v v2"></span><span class="v v3"></span><span class="v v4"></span></div>
<div class="r g"><i class="h"></i><span class="n" style="letter-spacing:-0.84px">Drive: KXG50ZNV256G NVMe TOS...</span><span class="v v1"></span><span class="v v2"></span><span class="v v3"></span><span class="v v4"></span></div>
<div class="r a"><i class="c"></i><span class="n">Read Activity</span><span class="v v1">0.0 %</span><span class="v v2">0.0 %</span><span class="v v3">45.9 %</span><span class="v v4">0.3 %</span></div>
<div class="r"><i class="c"></i><span class="n">Write Activity</span><span class="v v1">0.1 %</span><span class="v v2">0.0 %</span><span class="v v3">15.4 %</span><span class="v v4">0.4 %</span></div>
<div class="r a"><i class="c"></i><span class="n">Total Activity</span><span class="v v1">0.1 %</span><span class="v v2">0.0 %</span><span class="v v3">49.3 %</span><span class="v v4">0.7 %</span></div>
<div class="r"><i class="c"></i><span class="n">Read Rate</span><span class="v v1">0.000 MB/s</span><span class="v v2">0.000 MB/s</span><span class="v v3">21.125 MB/s</span><span class="v v4">0.188 MB/s</span></div>
<div class="r a"><i class="c"></i><span class="n">Write Rate</span><span class="v v1">0.031 MB/s</span><span class="v v2">0.000 MB/s</span><span class="v v3">52.573 MB/s</span><span class="v v4">0.244 MB/s</span></div>
<div class="r"><i class="c"></i><span class="n">Read Total</span><span class="v v1">5,470 MB</span><span class="v v2">5,297 MB</span><span class="v v3">5,470 MB</span></div>
<div class="r a"><i class="c"></i><span class="n">Write Total</span><span class="v v1">1,023 MB</span><span class="v v2">803 MB</span><span class="v v3">1,023 MB</span><span class="v v4"></span></div>
<div class="r"></div>
<div class="r g"><i class="h"></i><span class="n">GPU [#1]: NVIDIA GeForce GTX ...</span><span class="v v1"></span><span class="v v2"></span><span class="v v3"></span><span class="v v4"></span></div>
<div class="r"><i class="t"></i><span class="n">GPU Temperature</span><span class="v v1">61 °C</span><span class="v v2">44 °C</span><span class="v v3">62 °C</span><span class="v v4">60 °C</span></div>
<div class="r a"><i class="t"></i><span class="n">GPU Temperature (HW)</span><span class="v v1">61 °C</span><span class="v v2">44 °C</span><span class="v v3">62 °C</span><span class="v v4">60 °C</span></div>
<div class="r"><i class="b"></i><span class="n">GPU Core Voltage</span><span class="v v1">0.925 V</span><span class="v v2">0.581 V</span><span class="v v3">0.925 V</span><span class="v v4">0.906 V</span></div>
<div class="r a"><i class="b"></i><span class="n">GPU Power</span><span class="v v1">142.889 W</span><span class="v v2">12.587 W</span><span class="v v3">157.841 W</span><span class="v v4">137.262 W</span></div>
<div class="r"><i class="c"></i><span class="n">GPU Clock</span><span class="v v1">1,898.0 MHz</span><span class="v v2">405.0 MHz</span><span class="v v3">1,911.0 MHz</span><span class="v v4">1,818.0 MHz</span></div>
<div class="r a"><i class="c"></i><span class="n">GPU Memory Clock</span><span class="v v1">1,399.8 MHz</span><span class="v v2">101.3 MHz</span><span class="v v3">1,399.8 MHz</span><span class="v v4">1,328.6 MHz</span></div>
<div class="r"><i class="c"></i><span class="n">GPU Video Clock</span><span class="v v1">1,695.5 MHz</span><span class="v v2">544.0 MHz</span><span class="v v3">1,708.5 MHz</span><span class="v v4">1,631.4 MHz</span></div>
<div class="r a"><i class="c"></i><span class="n">GPU Core Load</span><span class="v v1">99.0 %</span><span class="v v2">4.0 %</span><span class="v v3">99.0 %</span><span class="v v4">93.7 %</span></div>
<div class="r"><i class="c"></i><span class="n">GPU Memory Controller Load</span><span class="v v1">48.0 %</span><span class="v v2">1.0 %</span><span class="v v3">55.0 %</span><span class="v v4">47.3 %</span></div>
<div class="r a"><i class="c"></i><span class="n">GPU Video Engine Load</span><span class="v v1">0.0 %</span><span class="v v2">0.0 %</span><span class="v v3">0.0 %</span><span class="v v4">0.0 %</span></div>
<div class="r"><i class="c"></i><span class="n">GPU Bus Load</span><span class="v v1">25.0 %</span><span class="v v2">2.0 %</span><span class="v v3">27.0 %</span><span class="v v4">18.7 %</span></div>
<div class="r a"><i class="c"></i><span class="n">GPU Memory Usage</span><span class="v v1">55.6 %</span><span class="v v2">53.3 %</span><span class="v v3">56.1 %</span><span class="v v4">55.4 %</span></div>
<div class="r"><i class="c"></i><span class="n">GPU D3D Usage</span><span class="v v1">2.1 %</span><span class="v v2">0.3 %</span><span class="v v3">26.6 %</span><span class="v v4">2.3 %</span></div>
<div class="r a"><i class="c"></i><span class="n">GPU Video Decode 0 Usage</span><span class="v v1">0.0 %</span><span class="v v2">0.0 %</span><span class="v v3">0.0 %</span><span class="v v4">0.0 %</span></div>
<div class="r"><i class="c"></i><span class="n">GPU Video Encode 0 Usage</span><span class="v v1">0.0 %</span><span class="v v2">0.0 %</span><span class="v v3">0.0 %</span><span class="v v4">0.0 %</span></div>
<div class="r a"><i class="c"></i><span class="n">GPU Video Encode 1 Usage</span><span class="v v1">0.0 %</span><span class="v v2">0.0 %</span><span class="v v3">0.0 %</span><span class="v v4">0.0 %</span></div>
<div class="r"><i class="c"></i><span class="n">GPU Computing (Compute_0) Us...</span><span class="v v1">0.0 %</span><span class="v v2">0.0 %</span><span class="v v3">0.0 %</span><span class="v v4">0.0 %</span></div>
<div class="r a"><i class="c"></i><span class="n">GPU Computing (Compute_1) Us...</span><span class="v v1">0.0 %</span><span class="v v2">0.0 %</span><span class="v v3">0.0 %</span><span class="v v4">0.0 %</span></div>
<div class="r"><i class="c"></i><span class="n">GPU VR Usage</span><span class="v v1">0.0 %</span><span class="v v2">0.0 %</span><span class="v v3">0.0 %</span><span class="v v4">0.0 %</span></div>
<div class="r a"><i class="c"></i><span class="n">Performance Limit - Power</span><span class="v v1">Yes</span><span class="v v2">No</span><span class="v v3">Yes</span><span class="v v4">Yes</span></div>
<div class="r"><i class="c"></i><span class="n">Performance Limit - Thermal</span><span class="v v1">Yes</span><span class="v v2">No</span><span class="v v3">Yes</span><span class="v v4">Yes</span></div>
<div class="r a"><i class="c"></i><span class="n">Performance Limit - Reliability Vol...</span><span class="v v1">Yes</span><span class="v v2">No</span><span class="v v3">Yes</span><span class="v v4">Yes</span></div>
<div class="r"><i class="c"></i><span class="n">Performance Limit - Max Operatin...</span><span class="v v1">Yes</span><span class="v v2">No</span><span class="v v3">Yes</span><span class="v v4">Yes</span></div>
<div class="r a"><i class="c"></i><span class="n">Performance Limit - Utilization</span><span class="v v1">No</span><span class="v v2">No</span><span class="v v3">Yes</span><span class="v v4">Yes</span></div>
<div class="r"><i class="c"></i><span class="n">Performance Limit - SLI GPUBoost...</span><span class="v v1">No</span><span class="v v2">No</span><span class="v v3">No</span><span class="v v4">No</span></div>
<div class="r a"><i class="c"></i><span class="n">GPU Memory Allocated</span><span class="v v1">4,551 MB</span><span class="v v2">4,368 MB</span><span class="v v3">4,595 MB</span><span class="v v4">4,536 MB</span></div>
<div class="r"><i class="c"></i><span class="n">GPU D3D Memory Dedicated</span><span class="v v1">4,449 MB</span><span class="v v2">4,266 MB</span><span class="v v3">4,494 MB</span><span class="v v4">4,434 MB</span></div>
<div class="r a"><i class="c"></i><span class="n">GPU D3D Memory Dynamic</span><span class="v v1">542 MB</span><span class="v v2">531 MB</span><span class="v v3">604 MB</span><span class="v v4">552 MB</span></div>
<div class="r"><i class="c"></i><span class="n">PCIe Link Speed</span><span class="v v1">8.0 GT/s</span><span class="v v2">2.5 GT/s</span><span class="v v3">8.0 GT/s</span><span class="v v4">7.7 GT/s</span></div>
</div>
<div class="sb"></div><div class="th"></div>
<svg style="position:absolute;left:966px;top:8px" width="14" height="9" viewBox="0 0 14 9"><path d="M1.5 7.5 L7 2 L12.5 7.5" fill="none" stroke="#484848" stroke-width="3"/></svg>
<svg style="position:absolute;left:966px;top:1836px" width="14" height="9" viewBox="0 0 14 9"><path d="M1.5 1.5 L7 7 L12.5 1.5" fill="none" stroke="#484848" stroke-width="3"/></svg>
</div>
<div class="btn" style="left:5px;width:57px;"><svg style="position:absolute;left:0;top:0" width="56" height="47" viewBox="0 0 56 47"><polygon points="24,22.5 15,22.5 15,16.5 5,26.5 15,36.5 15,30.5 24,30.5" fill="#1e8fe6"/><polygon points="29.5,22.5 38.5,22.5 38.5,16.5 48.5,26.5 38.5,36.5 38.5,30.5 29.5,30.5" fill="#1e8fe6"/></svg></div>
<div class="btn" style="left:66px;width:58px;"><svg style="position:absolute;left:0;top:0" width="57" height="47" viewBox="0 0 57 47"><polygon points="6,22.5 15,22.5 15,16.5 25,26.5 15,36.5 15,30.5 6,30.5" fill="#1e8fe6"/><polygon points="46,22.5 37,22.5 37,16.5 27,26.5 37,36.5 37,30.5 46,30.5" fill="#1e8fe6"/></svg></div>
<svg style="position:absolute;left:2413px;top:1917px" width="35" height="35" viewBox="0 0 35 35">
<rect width="35" height="35" rx="5" fill="#262626"/>
<g stroke="#f0f0f0" stroke-width="2.5" stroke-linecap="butt">
<path d="M17.5 3v9M17.5 23v9M3 17.5h9M23 17.5h9M7 7l6.5 6.5M21.5 21.5L28 28M28 7l-6.5 6.5M13.500 21.5L7 28"/></g>
<circle cx="17.500" cy="17.500" r="3" fill="#d08888"/>
</svg>
<div class="btn" style="left:2530px;width:59px;"><svg style="position:absolute;left:3px;top:2px" width="52" height="44" viewBox="0 0 52 44">
<defs><linearGradient id="gm" x1="0" y1="0" x2="1" y2="1"><stop offset="0" stop-color="#5ab8ff"/><stop offset="1" stop-color="#0a62c8"/></linearGradient></defs>
<path d="M20 14h14v12" fill="none" stroke="#e8e8e8" stroke-width="3"/>
<g><polygon points="4,4 26,2 27,17 6,20" fill="url(#gm)" stroke="#2a4a70" stroke-width="1"/><path d="M10 24l14-2" stroke="#303030" stroke-width="3.5"/><path d="M16 19v4" stroke="#505050" stroke-width="3"/></g>
<g transform="translate(22,19)"><polygon points="4,4 26,2 27,17 6,20" fill="url(#gm)" stroke="#2a4a70" stroke-width="1"/><path d="M10 24l14-2" stroke="#303030" stroke-width="3.5"/><path d="M16 19v4" stroke="#505050" stroke-width="3"/></g>
</svg></div>
<div class="time">0:15:44</div>
<div class="btn" style="left:2687px;width:59px;"><svg style="position:absolute;left:4px;top:0px" width="48" height="48" viewBox="0 0 48 48">
<circle cx="24" cy="24" r="21" fill="#fff" stroke="#2a2a2a" stroke-width="2.6"/>
<g stroke="#2a2a2a" stroke-width="2.4"><path d="M24 5v6M24 37v6M5 24h6M37 24h6M14.500 7.500l2.500 4.300M31 36.200l2.500 4.300M7.500 14.500l4.300 2.500M36.200 31l4.300 2.500M33.500 7.500l-2.500 4.300M17 36.200l-2.500 4.300M40.500 14.500l-4.300 2.500M11.800 31l-4.300 2.500"/></g>
<path d="M24 8v16h9" fill="none" stroke="#111" stroke-width="3.4"/>
</svg></div>
<div class="btn" style="left:2751px;width:59px;"><svg style="position:absolute;left:8px;top:2px" width="46" height="46" viewBox="0 0 46 46">
<path d="M7 3h19l7 7v30h-26z" fill="#f4f4f4" stroke="#c4c4c4" stroke-width="1.6"/>
<path d="M12 9v27M17 9v27M22 9v27M27 14v14" stroke="#d0d0d0" stroke-width="2"/>
<path d="M34 25v16M26 33h16" stroke="#98c83c" stroke-width="7" stroke-linecap="round"/>
</svg></div>
<div class="btn" style="left:2816px;width:59px;"><svg style="position:absolute;left:5px;top:1px" width="48" height="48" viewBox="0 0 48 48">
<g transform="translate(24,24)">
<g fill="#b9bec2"><rect x="-5.500" y="-21" width="11" height="12" rx="2" transform="rotate(0)"/><rect x="-5.500" y="-21" width="11" height="12" rx="2" transform="rotate(45)"/><rect x="-5.500" y="-21" width="11" height="12" rx="2" transform="rotate(90)"/><rect x="-5.500" y="-21" width="11" height="12" rx="2" transform="rotate(135)"/><rect x="-5.500" y="-21" width="11" height="12" rx="2" transform="rotate(180)"/><rect x="-5.500" y="-21" width="11" height="12" rx="2" transform="rotate(225)"/><rect x="-5.500" y="-21" width="11" height="12" rx="2" transform="rotate(270)"/><rect x="-5.500" y="-21" width="11" height="12" rx="2" transform="rotate(315)"/></g>
<circle r="15.500" fill="#b9bec2"/><circle r="13" fill="#d4d8db"/><circle r="8" fill="#e1e1e1" stroke="#a8adb2" stroke-width="2"/>
</g></svg></div>
<div class="btn" style="left:2881px;width:60px;border:3px solid #0078d7;"><svg style="position:absolute;left:9px;top:5px" width="38" height="38" viewBox="0 0 38 38">
<defs><linearGradient id="gx" x1="0" y1="0" x2="0" y2="1"><stop offset="0" stop-color="#1a74b8"/><stop offset="1" stop-color="#4ab0ee"/></linearGradient></defs>
<path d="M7 8L31 30M31 8L7 30" stroke="url(#gx)" stroke-width="9" stroke-linecap="round"/></svg></div>
<div class="bd" style="left:0;top:0;width:2957px;height:2px"></div>
<div class="bd" style="left:0;top:1971.8px;width:2957px;height:4px"></div>
<div class="bd" style="left:0;top:0;width:3px;height:1975.3px"></div>
<div class="bd" style="left:2953.5px;top:0;width:4px;height:1975.3px"></div>
<div style="left:0;top:44px;width:3px;height:1855px;background:#6b6898"></div>
</div>
</body></html>
